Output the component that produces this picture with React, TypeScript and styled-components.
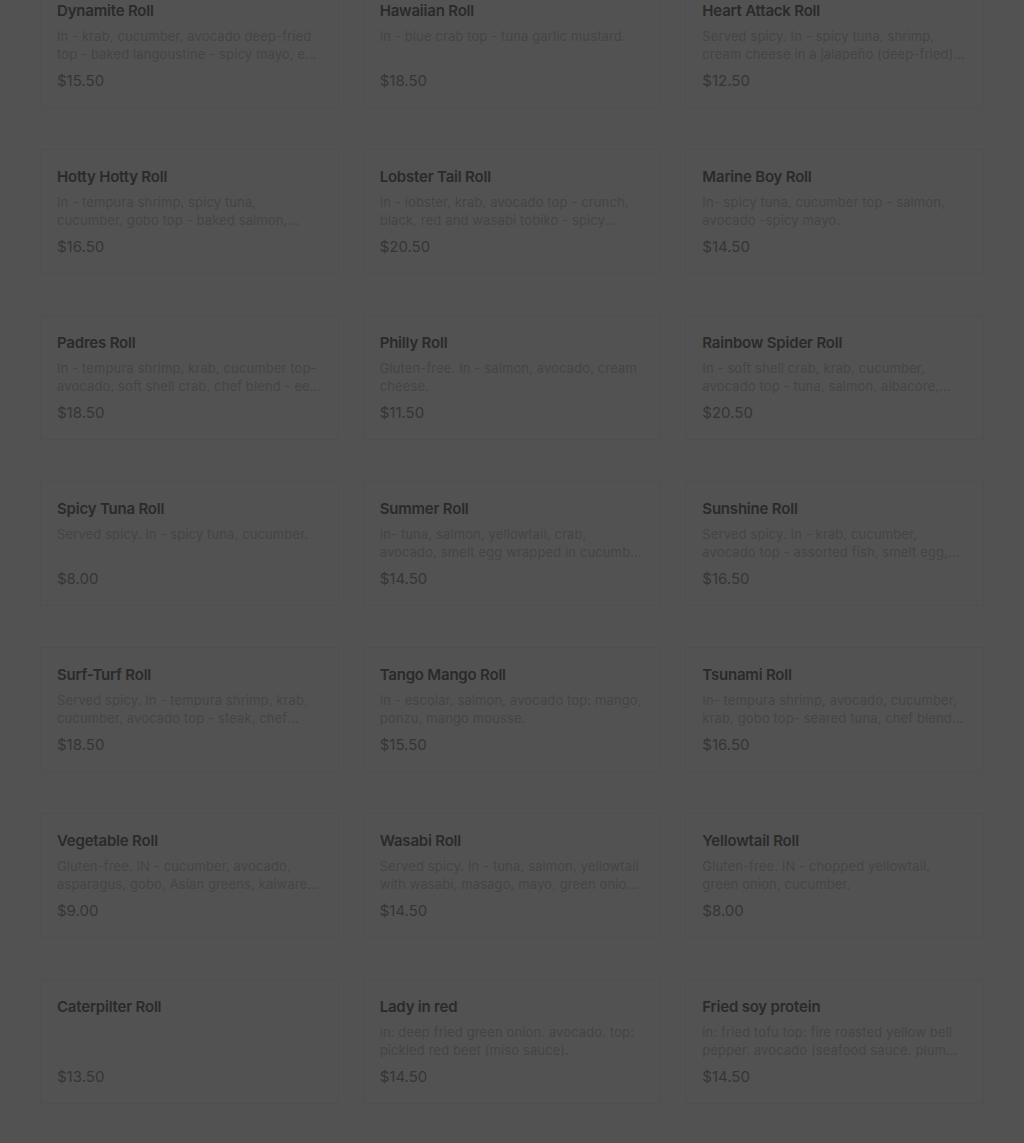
import React from "react";
import styled, { createGlobalStyle } from "styled-components";

const Global = createGlobalStyle`
  html, body { margin: 0; padding: 0; background: #525252; }
  body { font-family: Inter, "Noto Sans", "Liberation Sans", sans-serif; }
`;

const Page = styled.div`
  min-height: 1143px;
  background: #525252;
  overflow: hidden;
`;

const Grid = styled.div`
  display: grid;
  grid-template-columns: repeat(3, 1fr);
  column-gap: 24px;
  row-gap: 41px;
  padding: 0 40px 40px;
  margin-top: -17px;
`;

const Card = styled.div`
  border: 1px solid #4f4f4f;
  background: #525252;
  padding: 17px 16px 16px;
  display: flex;
  flex-direction: column;
  height: 125px;
  box-sizing: border-box;
`;

const Title = styled.div`
  font-size: 15px;
  line-height: 20px;
  font-weight: 600;
  color: #2a2a2a;
  letter-spacing: -0.2px;
`;

const Desc = styled.div`
  margin-top: 6px;
  font-size: 13px;
  line-height: 18px;
  height: 36px;
  color: #444444;
  letter-spacing: 0.12px;
  display: -webkit-box;
  -webkit-line-clamp: 2;
  -webkit-box-orient: vertical;
  overflow: hidden;
`;

const Price = styled.div`
  margin-top: 8px;
  font-size: 15px;
  line-height: 20px;
  color: #353535;
`;

const items: [string, string, string][] = [
  ["Dynamite Roll", "In - krab, cucumber, avocado deep-fried top - baked langoustine - spicy mayo, eel sauce, green onion.", "$15.50"],
  ["Hawaiian Roll", "In - blue crab top - tuna garlic mustard.", "$18.50"],
  ["Heart Attack Roll", "Served spicy. In - spicy tuna, shrimp, cream cheese in a jalapeño (deep-fried) - spicy mayo, eel sauce.", "$12.50"],
  ["Hotty Hotty Roll", "In - tempura shrimp, spicy tuna, cucumber, gobo top - baked salmon, dexxx sauce, green onion.", "$16.50"],
  ["Lobster Tail Roll", "In - lobster, krab, avocado top - crunch, black, red and wasabi tobiko - spicy mayo, eel sauce.", "$20.50"],
  ["Marine Boy Roll", "In- spicy tuna, cucumber top - salmon, avocado -spicy mayo.", "$14.50"],
  ["Padres Roll", "In - tempura shrimp, krab, cucumber top- avocado, soft shell crab, chef blend - eel sauce.", "$18.50"],
  ["Philly Roll", "Gluten-free. In - salmon, avocado, cream cheese.", "$11.50"],
  ["Rainbow Spider Roll", "In - soft shell crab, krab, cucumber, avocado top - tuna, salmon, albacore, yellowtail.", "$20.50"],
  ["Spicy Tuna Roll", "Served spicy. In - spicy tuna, cucumber.", "$8.00"],
  ["Summer Roll", "In- tuna, salmon, yellowtail, crab, avocado, smelt egg wrapped in cucumber - ponzu sauce.", "$14.50"],
  ["Sunshine Roll", "Served spicy. In - krab, cucumber, avocado top - assorted fish, smelt egg, green onion.", "$16.50"],
  ["Surf-Turf Roll", "Served spicy. In - tempura shrimp, krab, cucumber, avocado top - steak, chef blend sauce.", "$18.50"],
  ["Tango Mango Roll", "In - escolar, salmon, avocado top: mango, ponzu, mango mousse.", "$15.50"],
  ["Tsunami Roll", "In- tempura shrimp, avocado, cucumber, krab, gobo top- seared tuna, chef blend sauce.", "$16.50"],
  ["Vegetable Roll", "Gluten-free. IN - cucumber, avocado, asparagus, gobo, Asian greens, kaiware sprouts.", "$9.00"],
  ["Wasabi Roll", "Served spicy. In - tuna, salmon, yellowtail with wasabi, masago, mayo, green onion, spicy sauce.", "$14.50"],
  ["Yellowtail Roll", "Gluten-free. IN - chopped yellowtail, green onion, cucumber.", "$8.00"],
  ["Caterpilter Roll", "", "$13.50"],
  ["Lady in red", "in: deep fried green onion. avocado. top: pickled red beet (miso sauce).", "$14.50"],
  ["Fried soy protein", "in: fried tofu top: fire roasted yellow bell pepper. avocado (seafood sauce. plum sauce).", "$14.50"],
];

export default function App() {
  return (
    <Page>
      <Global />
      <Grid>
        {items.map(([t, d, p]) => (
          <Card key={t}>
            <Title>{t}</Title>
            <Desc>{d}</Desc>
            <Price>{p}</Price>
          </Card>
        ))}
      </Grid>
    </Page>
  );
}
